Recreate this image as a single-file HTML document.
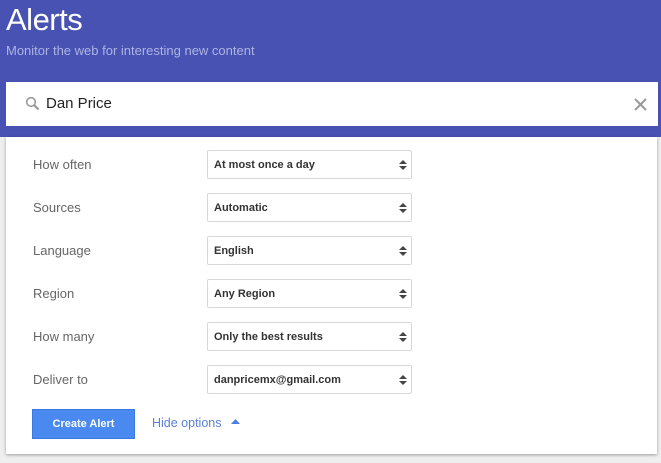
<!DOCTYPE html>
<html><head><style>
body{margin:0;width:661px;height:463px;background:#efefef;font-family:"Liberation Sans",sans-serif;position:relative;overflow:hidden}
.hdr{position:absolute;left:0;top:0;width:661px;height:137px;background:#4752b2}
.t{position:absolute;left:6px;top:2px;color:#fff;font-size:31px;font-weight:300;letter-spacing:-0.5px}
.s{position:absolute;left:6px;top:43px;color:#aeb4e4;font-size:13px}
.search{position:absolute;left:6px;top:82px;width:652px;height:44px;background:#fff}
.search .q{position:absolute;left:40px;top:13px;font-size:15px;color:#222}
.card{position:absolute;left:6px;top:137px;width:651px;height:317px;background:#fff;box-shadow:0 1px 3px rgba(0,0,0,.35)}
.lab{position:absolute;left:33px;font-size:13px;color:#666}
.sel{position:absolute;left:207px;width:203px;height:27px;border:1px solid #d8d8d8;border-radius:2px;background:#fff;font-size:11px;font-weight:bold;color:#333;line-height:27px}
.sel span{position:absolute;left:6px;top:1px}
.btn{position:absolute;left:32px;top:409px;width:103px;height:30px;background:#4a89ef;border:1px solid #3b78e0;box-sizing:border-box;color:#fff;font-size:11px;font-weight:bold;text-align:center;line-height:28px}
.hide{position:absolute;left:152px;top:416px;color:#5a7fd6;font-size:12.5px}
</style></head><body>
<div class="hdr"><div class="t">Alerts</div><div class="s">Monitor the web for interesting new content</div></div>
<div class="card"></div>
<div class="search">
<svg style="position:absolute;left:19px;top:14px" width="16" height="16" viewBox="0 0 16 16"><circle cx="6" cy="6" r="4.3" fill="none" stroke="#999" stroke-width="1.6"/><line x1="9.2" y1="9.2" x2="13.5" y2="13.5" stroke="#999" stroke-width="2.2"/></svg>
<div class="q">Dan Price</div>
<svg style="position:absolute;left:628px;top:16px" width="13" height="13" viewBox="0 0 13 13"><path d="M1 1L12 12M12 1L1 12" stroke="#999" stroke-width="2"/></svg>
</div>
<div class="lab" style="top:157px">How often</div>
<div class="lab" style="top:200px">Sources</div>
<div class="lab" style="top:243px">Language</div>
<div class="lab" style="top:286px">Region</div>
<div class="lab" style="top:329px">How many</div>
<div class="lab" style="top:372px">Deliver to</div>
<div class="sel" style="top:150px"><span>At most once a day</span><svg style="position:absolute;right:4px;top:8px" width="8" height="12"><path d="M0 5L4 1L8 5ZM0 7L8 7L4 11Z" fill="#444"/></svg></div>
<div class="sel" style="top:193px"><span>Automatic</span><svg style="position:absolute;right:4px;top:8px" width="8" height="12"><path d="M0 5L4 1L8 5ZM0 7L8 7L4 11Z" fill="#444"/></svg></div>
<div class="sel" style="top:236px"><span>English</span><svg style="position:absolute;right:4px;top:8px" width="8" height="12"><path d="M0 5L4 1L8 5ZM0 7L8 7L4 11Z" fill="#444"/></svg></div>
<div class="sel" style="top:279px"><span>Any Region</span><svg style="position:absolute;right:4px;top:8px" width="8" height="12"><path d="M0 5L4 1L8 5ZM0 7L8 7L4 11Z" fill="#444"/></svg></div>
<div class="sel" style="top:322px"><span>Only the best results</span><svg style="position:absolute;right:4px;top:8px" width="8" height="12"><path d="M0 5L4 1L8 5ZM0 7L8 7L4 11Z" fill="#444"/></svg></div>
<div class="sel" style="top:365px"><span>danpricemx@gmail.com</span><svg style="position:absolute;right:4px;top:8px" width="8" height="12"><path d="M0 5L4 1L8 5ZM0 7L8 7L4 11Z" fill="#444"/></svg></div>
<div class="btn">Create Alert</div>
<div class="hide">Hide options <svg width="9" height="6" style="margin-left:6px;vertical-align:2px"><path d="M0 5L4.5 0L9 5Z" fill="#4a7fe0"/></svg></div>
</body></html>
